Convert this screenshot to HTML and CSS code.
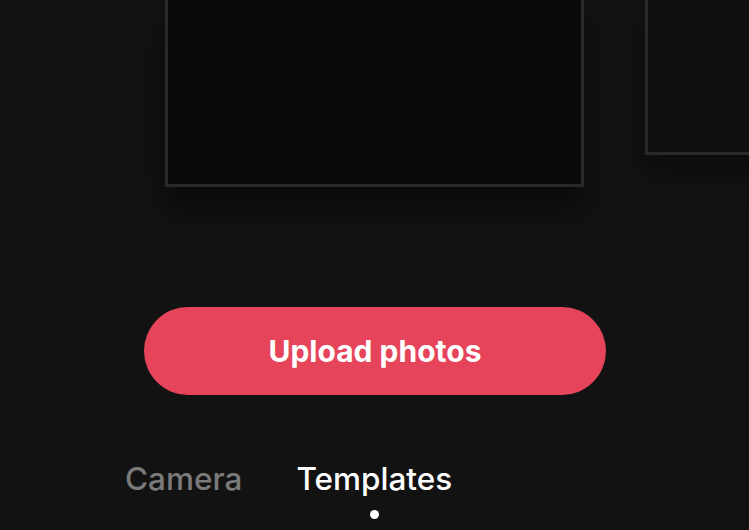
FILE: index.html
```html
<!DOCTYPE html>
<html lang="en">
<head>
	<meta charset="UTF-8">
	<title>Upload</title>
	<link rel="stylesheet" href="styles.css">
</head>
<body>
	<div class="app">
		<div class="carousel">
			<div class="frame main"></div>
			<div class="frame side"></div>
		</div>
		<button class="upload">Upload photos</button>
		<ul class="tabs">
			<li class="tab">Camera</li>
			<li class="tab active">Templates<span class="dot"></span></li>
		</ul>
	</div>
</body>
</html>
```
FILE: styles.css
```css
*{
	margin: 0;
	padding: 0;
	box-sizing: border-box;
}
li{
	list-style: none;
}
body{
	background: #121212;
	font-family: Inter, "Liberation Sans", sans-serif;
}
.app{
	height: 530px;
	overflow: hidden;
	display: flex;
	flex-direction: column;
}
.carousel{
	display: flex;
	align-items: flex-start;
	gap: 61px;
	padding-left: 165px;
	height: 187px;
}
.frame{
	flex-shrink: 0;
	background: #0a0a0a;
	border: 3px solid #292929;
	border-top: 0;
}
.main{
	width: 419px;
	height: 187px;
	box-shadow: 0 22px 30px rgba(0,0,0,.45);
}
.side{
	width: 200px;
	height: 155px;
	background: #101010;
	box-shadow: 0 18px 26px rgba(0,0,0,.35);
}
.upload{
	margin: 120px 0 0 144px;
	width: 462px;
	height: 88px;
	border: 0;
	border-radius: 44px;
	background: #e5445a;
	color: #fff;
	font-family: inherit;
	font-size: 30px;
	font-weight: 700;
}
.tabs{
	display: flex;
	gap: 54px;
	padding-left: 125px;
	margin-top: 66px;
}
.tab{
	font-size: 31.5px;
	line-height: 36px;
	font-weight: 500;
	color: #7a7a7a;
	display: flex;
	flex-direction: column;
	align-items: center;
}
.tab.active{
	color: #fff;
}
.dot{
	width: 9px;
	height: 9px;
	border-radius: 50%;
	background: #fff;
	margin-top: 13px;
}
```
